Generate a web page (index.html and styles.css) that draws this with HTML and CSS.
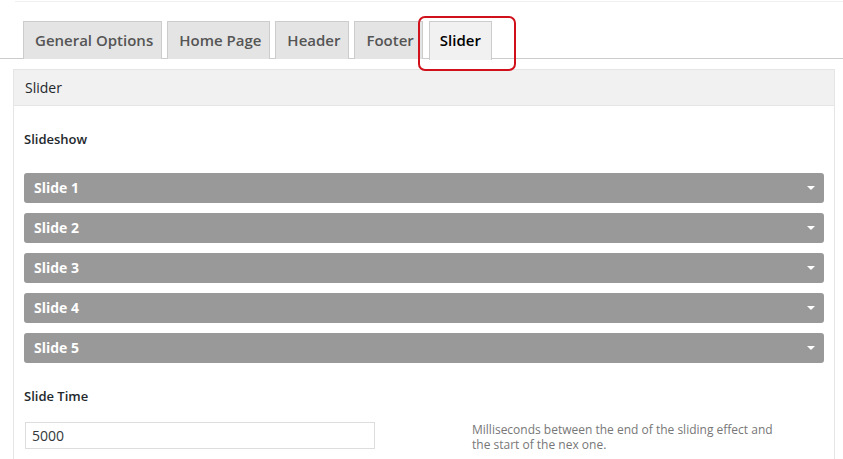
FILE: index.html
```html
<!DOCTYPE html>
<html lang="en">
<head>
  <meta charset="UTF-8" />
  <title>Theme Options - Slider</title>
  <link rel="stylesheet" href="styles.css">
</head>
<body>

  <div class="topline"></div>

  <div class="tabs">
    <div class="tab">General Options</div>
    <div class="tab">Home Page</div>
    <div class="tab">Header</div>
    <div class="tab">Footer</div>
    <div class="tab active">Slider</div>
  </div>

  <div class="panel">
    <div class="panel-header">Slider</div>
    <div class="panel-body">
      <div class="field-label">Slideshow</div>

      <div class="slides">
        <div class="slide"><span>Slide 1</span><i class="caret"></i></div>
        <div class="slide"><span>Slide 2</span><i class="caret"></i></div>
        <div class="slide"><span>Slide 3</span><i class="caret"></i></div>
        <div class="slide"><span>Slide 4</span><i class="caret"></i></div>
        <div class="slide"><span>Slide 5</span><i class="caret"></i></div>
      </div>

      <div class="field-label time-label">Slide Time</div>
      <div class="field-row">
        <input type="text" class="text-input" value="5000">
        <p class="desc">Milliseconds between the end of the sliding effect and the start of the nex one.</p>
      </div>
    </div>
  </div>

</body>
</html>
```

FILE: styles.css
```css
* {
  margin: 0;
  padding: 0;
  box-sizing: border-box;
}

body {
  font-family: "Open Sans", "Liberation Sans", sans-serif;
  background: #fff;
  color: #23282d;
  width: 843px;
  height: 459px;
  overflow: hidden;
}

.topline {
  height: 2px;
  margin-left: 15px;
  border-bottom: 1px solid #f0f0f0;
}

.tabs {
  display: flex;
  gap: 5px;
  padding-left: 23px;
  margin-top: 19px;
  border-bottom: 1px solid #ccc;
  height: 38px;
}

.tab {
  height: 38px;
  padding: 0 8px 0 11px;
  background: #e4e4e4;
  border: 1px solid #ccc;
  border-bottom: none;
  font-size: 15px;
  font-weight: 600;
  color: #555;
  line-height: 36px;
}

.tab.active {
  position: relative;
  margin-left: 1px;
  padding: 0 10px;
  background: #f1f1f1;
  color: #000;
  height: 39px;
}

/* red highlight box drawn around the active tab */
.tab.active::after {
  content: "";
  position: absolute;
  left: -12px;
  top: -6px;
  width: 94px;
  height: 51px;
  border: 2px solid #d0101b;
  border-radius: 7px;
}

.panel {
  margin: 10px 8px 0 13px;
  border: 1px solid #e5e5e5;
  background: #fff;
  height: 400px;
}

.panel-header {
  height: 36px;
  background: #f1f1f1;
  border-bottom: 1px solid #e5e5e5;
  padding-left: 11px;
  font-size: 14px;
  line-height: 35px;
  color: #23282d;
}

.panel-body {
  padding: 23px 10px 0 10px;
}

.field-label {
  font-size: 13px;
  font-weight: 600;
  line-height: 20px;
  color: #23282d;
}

.slides {
  margin-top: 24px;
  display: flex;
  flex-direction: column;
  gap: 10px;
}

.slide {
  height: 30px;
  background: #999;
  border-radius: 3px;
  display: flex;
  align-items: center;
  justify-content: space-between;
  padding: 0 9px 1px 10px;
  color: #fff;
  font-size: 14px;
  font-weight: 700;
}

.caret {
  width: 0;
  height: 0;
  border-left: 4px solid transparent;
  border-right: 4px solid transparent;
  border-top: 4px solid #fff;
}

.time-label {
  margin-top: 23px;
}

.field-row {
  display: flex;
  align-items: flex-start;
  margin-top: 16px;
}

.text-input {
  width: 350px;
  height: 27px;
  margin-left: 1px;
  border: 1px solid #ddd;
  padding: 0 6px;
  font-family: "Open Sans", "Liberation Sans", sans-serif;
  font-size: 14px;
  color: #32373c;
  outline: none;
}

.desc {
  margin-left: 97px;
  width: 320px;
  font-size: 12px;
  line-height: 15px;
  color: #777;
}
```
